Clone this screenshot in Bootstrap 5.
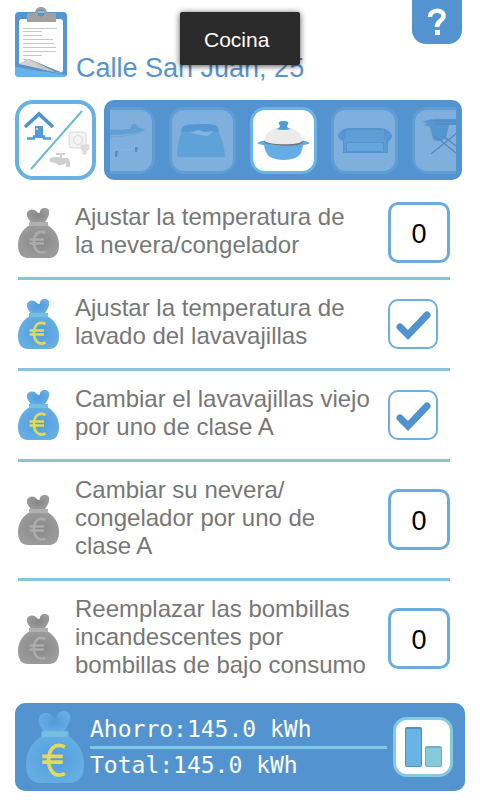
<!DOCTYPE html>
<html lang="es">
<head>
<meta charset="utf-8">
<meta name="viewport" content="width=device-width, initial-scale=1">
<title>Calle San Juan, 25</title>
<link rel="stylesheet" href="https://cdn.jsdelivr.net/npm/bootstrap@5.3.0/dist/css/bootstrap.min.css">
<style>
  body { font-family: "Liberation Sans", Arial, sans-serif; background: #fff; color: #777; }
  .blue-panel { background: #5394d0; border-radius: 10px; }
  .site-head { height: 100px; padding: 0 18px 0 15px; }
  .clip-icon { width: 53px; height: 71px; margin-top: 7px; }
  .site-name { font-size: 27px; line-height: 30px; color: #5693cf; margin: 53px 0 0 8px; }
  .help-btn { width: 50px; height: 44px; border-radius: 0 0 14px 14px; background: #5394d0; }
  .toast-note { top: 12px; width: 120px; height: 53px; padding: 2px 24px 0; font-size: 21px; background: #2a2a2a; border-radius: 2px; box-shadow: 0 1px 6px rgba(0,0,0,.7); z-index: 5; }
  .rooms { padding: 0 18px 0 15px; gap: 8px; height: 80px; }
  .switch-btn { width: 81px; border: 4px solid #68b1e2; border-radius: 18px; background: #fff; }
  .room-strip { padding: 0 6px; min-width: 0; }
  .room-window { gap: 14px; }
  .tile { width: 67px; height: 67px; border: 3px solid #68b4e6; border-radius: 15px; background: #fff; }
  .tile-dim { border-color: #609dd5; background: #7fafdc; }
  .measures { margin: 9px 30px 0 18px; }
  .measure { padding: 14px 0; min-height: 88px; }
  .measure + .measure { border-top: 3px solid #88c4d9; }
  .bag { width: 41px; height: 50px; margin-right: 16px; }
  .measure-text { font-size: 24px; line-height: 28px; }
  .control-cell { width: 62px; }
  .amount { width: 62px; height: 61px; margin: -1px 0 0; border: 3px solid #6cacdd; border-radius: 10px; font-size: 27px; color: #000; background: #fff; padding: 3px 0 0; }
  .form-check-input.tick { width: 50px; height: 50px; margin: 0; border: 2px solid #6cb0df; border-radius: 10px; background-color: #fff; }
  .form-check-input.tick:checked { background-color: #fff; border-color: #6cb0df; background-size: 46px 46px;
    background-image: url("data:image/svg+xml,%3Csvg xmlns='http://www.w3.org/2000/svg' viewBox='0 0 46 46'%3E%3Cpath d='M10 26l8 8L37 14' fill='none' stroke='%235193cf' stroke-width='7' stroke-linecap='round'/%3E%3C/svg%3E"); }
  .summary { margin: 6px 15px 9px; height: 88px; padding: 0 12px 0 11px; }
  .summary .big-bag { width: 58px; height: 72px; }
  .totals { margin: 0 6px; font-family: "DejaVu Sans Mono", monospace; font-size: 23px; line-height: 33px; color: #fff; }
  .totals hr { height: 3px; margin: 0; border: 0; background: #7ec8e3; opacity: 1; }
  .chart-btn { width: 60px; height: 60px; border: 3px solid #84cbdf; border-radius: 14px; background: #fff; }
</style>
</head>
<body>
<svg width="0" height="0" class="position-absolute" aria-hidden="true">
  <defs>
    <radialGradient id="gBlue"><stop offset="0" stop-color="#529bdc"/><stop offset="1" stop-color="#65ade3"/></radialGradient>
    <radialGradient id="gGrey"><stop offset="0" stop-color="#868686"/><stop offset="1" stop-color="#9b9b9b"/></radialGradient>
    <symbol id="sack" viewBox="0 0 41 50" preserveAspectRatio="none">
      <path d="M13 15C11 11 8 9 9 5c1-4 7-5 10-1 2 2 3 1 3-1 1-3 5-4 8-2 3 3 0 9-3 13z"/>
      <path d="M12 17h17c8 4 12 12 12 20 0 9-4 13-10 13H10C4 50 0 46 0 37c0-8 4-16 12-20z"/>
    </symbol>
    <symbol id="euro" viewBox="0 0 41 50" preserveAspectRatio="none">
      <path d="M27.500 25C20 21.500 16 27 16 34S20 47 27.500 43.500M11.500 31.500H26M11.500 35.500H26" fill="none" stroke-width="2.600"/>
    </symbol>
    <symbol id="bagGrey" viewBox="0 0 41 50"><use href="#sack" fill="url(#gGrey)"/><path d="M11 14h19v4H11z" fill="#b0b0b0"/><use href="#euro" stroke="#acacac"/></symbol>
    <symbol id="bagBlue" viewBox="0 0 41 50"><use href="#sack" fill="url(#gBlue)"/><path d="M11 14h19v4H11z" fill="#74bee0"/><use href="#euro" stroke="#e3d95b"/></symbol>
  </defs>
</svg>

<div class="toast-note position-absolute start-50 translate-middle-x d-flex align-items-center text-white" role="status">Cocina</div>

<header class="site-head d-flex align-items-start">
  <svg class="clip-icon flex-shrink-0" viewBox="0 0 53 71" aria-hidden="true">
    <rect y="5" width="52" height="65" rx="4" fill="#5595d1"/>
    <path d="M0 60l52 8q-1 2-4 2H4q-4 0-4-4z" fill="#6ab2e6"/>
    <path d="M4 15q0-3 3-3h38q3 0 3 3v48q0 3-3 3L4 59z" fill="#fff"/>
    <path d="M4 57l10-5 34 14Q25 65 4 60z" fill="#5b92c4"/><path d="M4 57l10-5 26 13z" fill="#d2d2d0"/><path d="M14 52l12 10 14 3z" fill="#c5c6c6"/>
    <path d="M8 21.500h34M8 24.500h19M8 28.500h19M8 32.500h30M8 36.500h31M8 40.500h33M8 44.500h33M8 48.500h19M8 52.500h5" stroke="#c8c8c8"/>
    <path d="M12 6h8C20-2 32-2 32 6h9v9H12z" fill="#a2a09f"/><circle cx="26" cy="6" r="3.500" fill="#5792c8"/><path d="M23 5h6" stroke="#ddd"/>
  </svg>
  <h1 class="site-name fw-normal text-nowrap">Calle San Juan, 25</h1>
  <button class="help-btn btn p-0 border-0 ms-auto d-flex align-items-center justify-content-center" type="button" aria-label="Ayuda">
    <svg width="20" height="28" viewBox="0 0 20 28" aria-hidden="true"><path d="M3 9C3 1 17 1 16.500 8c0 5-6.500 4-6.500 11" fill="none" stroke="#fff" stroke-width="4.500"/><path d="M8 22h5v5H8z" fill="#fff"/></svg>
  </button>
</header>

<main>
  <nav class="rooms d-flex" aria-label="Estancias">
    <button class="switch-btn btn p-0 flex-shrink-0" type="button" aria-label="Cambiar de categoría">
      <svg width="73" height="72" viewBox="0 0 73 72" class="d-block" aria-hidden="true">
        <path d="M12 65L63 7" stroke="#6dbbd5" stroke-width="2"/>
        <path d="M6 23L20 10l14 13" fill="none" stroke="#4b91d4" stroke-width="3.500"/>
        <path d="M8 34.500h7v-2h10v2h7" fill="none" stroke="#559bd8" stroke-width="2.500"/><path d="M16 22h8v12h-8z" fill="#559bd8"/><path d="M17 24h2v2h-2z" fill="#b6dcf5"/>
        <g fill="#f3f3f3" stroke="#d9d9d9"><rect x="50" y="28" width="17" height="16" rx="3"/><circle cx="59" cy="36" r="4.500"/><path d="M62 41h8v4l-3 2v3h-3v-3l-2-2z" fill="#ddd"/></g>
        <path d="M35 53h6v-2h-4v-2h9v2h-3v3h6q3 3 2 9h-4v-4q-4 3-8 2-3-3-8-3v-4z" fill="#d0d0d0"/>
      </svg>
    </button>
    <div class="room-strip blue-panel flex-fill d-flex">
      <div class="room-window d-flex align-items-center justify-content-center overflow-hidden flex-fill">
        <button class="tile tile-dim btn p-0 flex-shrink-0" type="button" aria-label="Baño">
          <svg width="61" height="61" viewBox="0 0 61 61" class="d-block"><path d="M3 19q22 1 36 0l1-3q0-2 3-2t4 2l1 2 6 1q-2 5-34 6H3z" fill="#609fd6"/><path d="M3 27q36 1 49-6" fill="none" stroke="#6ea5d8"/><path d="M8 28q4 12 14 12h16q10-2 12-15" fill="none" stroke="#88b5e0"/><path d="M24 41h3l-1 6h-2zM44 37h3l-1 5h-2z" fill="#5b8abd"/></svg>
        </button>
        <button class="tile tile-dim btn p-0 flex-shrink-0" type="button" aria-label="Dormitorio">
          <svg width="61" height="61" viewBox="0 0 61 61" class="d-block"><path d="M9 24q0-8 5-9 16-2 29 0 4 1 4 9z" fill="#5596d3"/><path d="M10 22l13-1 8 2 15-1q6 8 7 25H5q0-16 5-25z" fill="#5fa2d8"/><path d="M18 23l8-3 7 2 9-1-7 5z" fill="#84b5df"/></svg>
        </button>
        <button class="tile btn p-0 flex-shrink-0" type="button" aria-label="Cocina" aria-pressed="true">
          <svg width="61" height="61" viewBox="0 0 61 61" class="d-block"><ellipse cx="30.500" cy="33" rx="26" ry="3.500" fill="#5caee3"/><path d="M11 33h39q0 12-8 15-11 4-23 0-8-4-8-15z" fill="#64aee4"/><path d="M11 31c1-9 10-14 19.500-14S49 22 50 31q-4 3-19.500 4T11 31z" fill="#ebebeb"/><path d="M11 31.500q3 3 19.500 3.500T50 31.500" fill="none" stroke="#75777b" stroke-width="1.500"/><path d="M23 19q4-1 4-3-4-5 3.500-5t3.500 5q0 2 4 3-7 2-15 0z" fill="#4f9bd8"/></svg>
        </button>
        <button class="tile tile-dim btn p-0 flex-shrink-0" type="button" aria-label="Salón">
          <svg width="61" height="61" viewBox="0 0 61 61" class="d-block"><path d="M4 25q4-7 11-7h31q8 0 12 7 0 4-4 7v11H9V31q-5-2-5-6z" fill="#5694d1"/><path d="M12 20h38v11H12z" fill="#5e9dd8"/><path d="M13 33h36v8H13z" fill="#65a7dc"/><path d="M11 31h40M4 24q6 0 7 7v11M58 24q-6 0-7 7v11" fill="none" stroke="#65a3da"/></svg>
        </button>
        <button class="tile tile-dim btn p-0 flex-shrink-0" type="button" aria-label="Lavadero">
          <svg width="61" height="61" viewBox="0 0 61 61" class="d-block"><path d="M7 12q10-4 19-3h33v6H34l-1 4-2 9q-8 6-13 1l-3-12-6-2 4-2z" fill="#5396d0"/><path d="M16 44l43-35M20 26l36 29M18 11h40M19 14h40M28 26l34 26" fill="none" stroke="#5588ba" stroke-width="1.200"/></svg>
        </button>
      </div>
    </div>
  </nav>

  <ul class="measures list-unstyled">
    <li class="measure d-flex align-items-center">
      <svg class="bag flex-shrink-0" aria-hidden="true"><use href="#bagGrey"/></svg>
      <label class="measure-text flex-fill pb-1" for="m1">Ajustar la temperatura de<br>la nevera/congelador</label>
      <div class="control-cell flex-shrink-0"><input class="amount d-block text-center" id="m1" type="text" inputmode="numeric" value="0"></div>
    </li>
    <li class="measure d-flex align-items-center">
      <svg class="bag flex-shrink-0" aria-hidden="true"><use href="#bagBlue"/></svg>
      <label class="measure-text flex-fill pb-1" for="m2">Ajustar la temperatura de<br>lavado del lavavajillas</label>
      <div class="control-cell flex-shrink-0"><input class="form-check-input tick d-block" id="m2" type="checkbox" checked></div>
    </li>
    <li class="measure d-flex align-items-center">
      <svg class="bag flex-shrink-0" aria-hidden="true"><use href="#bagBlue"/></svg>
      <label class="measure-text flex-fill pb-1" for="m3">Cambiar el lavavajillas viejo<br>por uno de clase A</label>
      <div class="control-cell flex-shrink-0"><input class="form-check-input tick d-block" id="m3" type="checkbox" checked></div>
    </li>
    <li class="measure d-flex align-items-center">
      <svg class="bag flex-shrink-0" aria-hidden="true"><use href="#bagGrey"/></svg>
      <label class="measure-text flex-fill pb-1" for="m4">Cambiar su nevera/<br>congelador por uno de<br>clase A</label>
      <div class="control-cell flex-shrink-0"><input class="amount d-block text-center" id="m4" type="text" inputmode="numeric" value="0"></div>
    </li>
    <li class="measure d-flex align-items-center">
      <svg class="bag flex-shrink-0" aria-hidden="true"><use href="#bagGrey"/></svg>
      <label class="measure-text flex-fill pb-1" for="m5">Reemplazar las bombillas<br>incandescentes por<br>bombillas de bajo consumo</label>
      <div class="control-cell flex-shrink-0"><input class="amount d-block text-center" id="m5" type="text" inputmode="numeric" value="0"></div>
    </li>
  </ul>
</main>

<footer class="summary blue-panel d-flex align-items-center">
  <svg class="big-bag flex-shrink-0" viewBox="0 0 41 50" preserveAspectRatio="none" aria-hidden="true"><use href="#bagBlue"/></svg>
  <div class="totals flex-fill">
    <div>Ahorro:145.0 kWh</div>
    <hr>
    <div>Total:145.0 kWh</div>
  </div>
  <button class="chart-btn btn p-0 flex-shrink-0" type="button" aria-label="Ver gráfico">
    <svg width="54" height="54" viewBox="0 0 54 54" class="d-block" aria-hidden="true"><rect x="9" y="7" width="17" height="40" rx="2" fill="#518fc4"/><rect x="10" y="9" width="15" height="37" rx="1" fill="#67b4e5"/><rect x="29" y="26" width="17" height="21" rx="2" fill="#6fafc0"/><rect x="30" y="28" width="15" height="18" rx="1" fill="#85cadd"/></svg>
  </button>
</footer>
<script src="https://cdn.jsdelivr.net/npm/bootstrap@5.3.0/dist/js/bootstrap.bundle.min.js"></script>
</body>
</html>
